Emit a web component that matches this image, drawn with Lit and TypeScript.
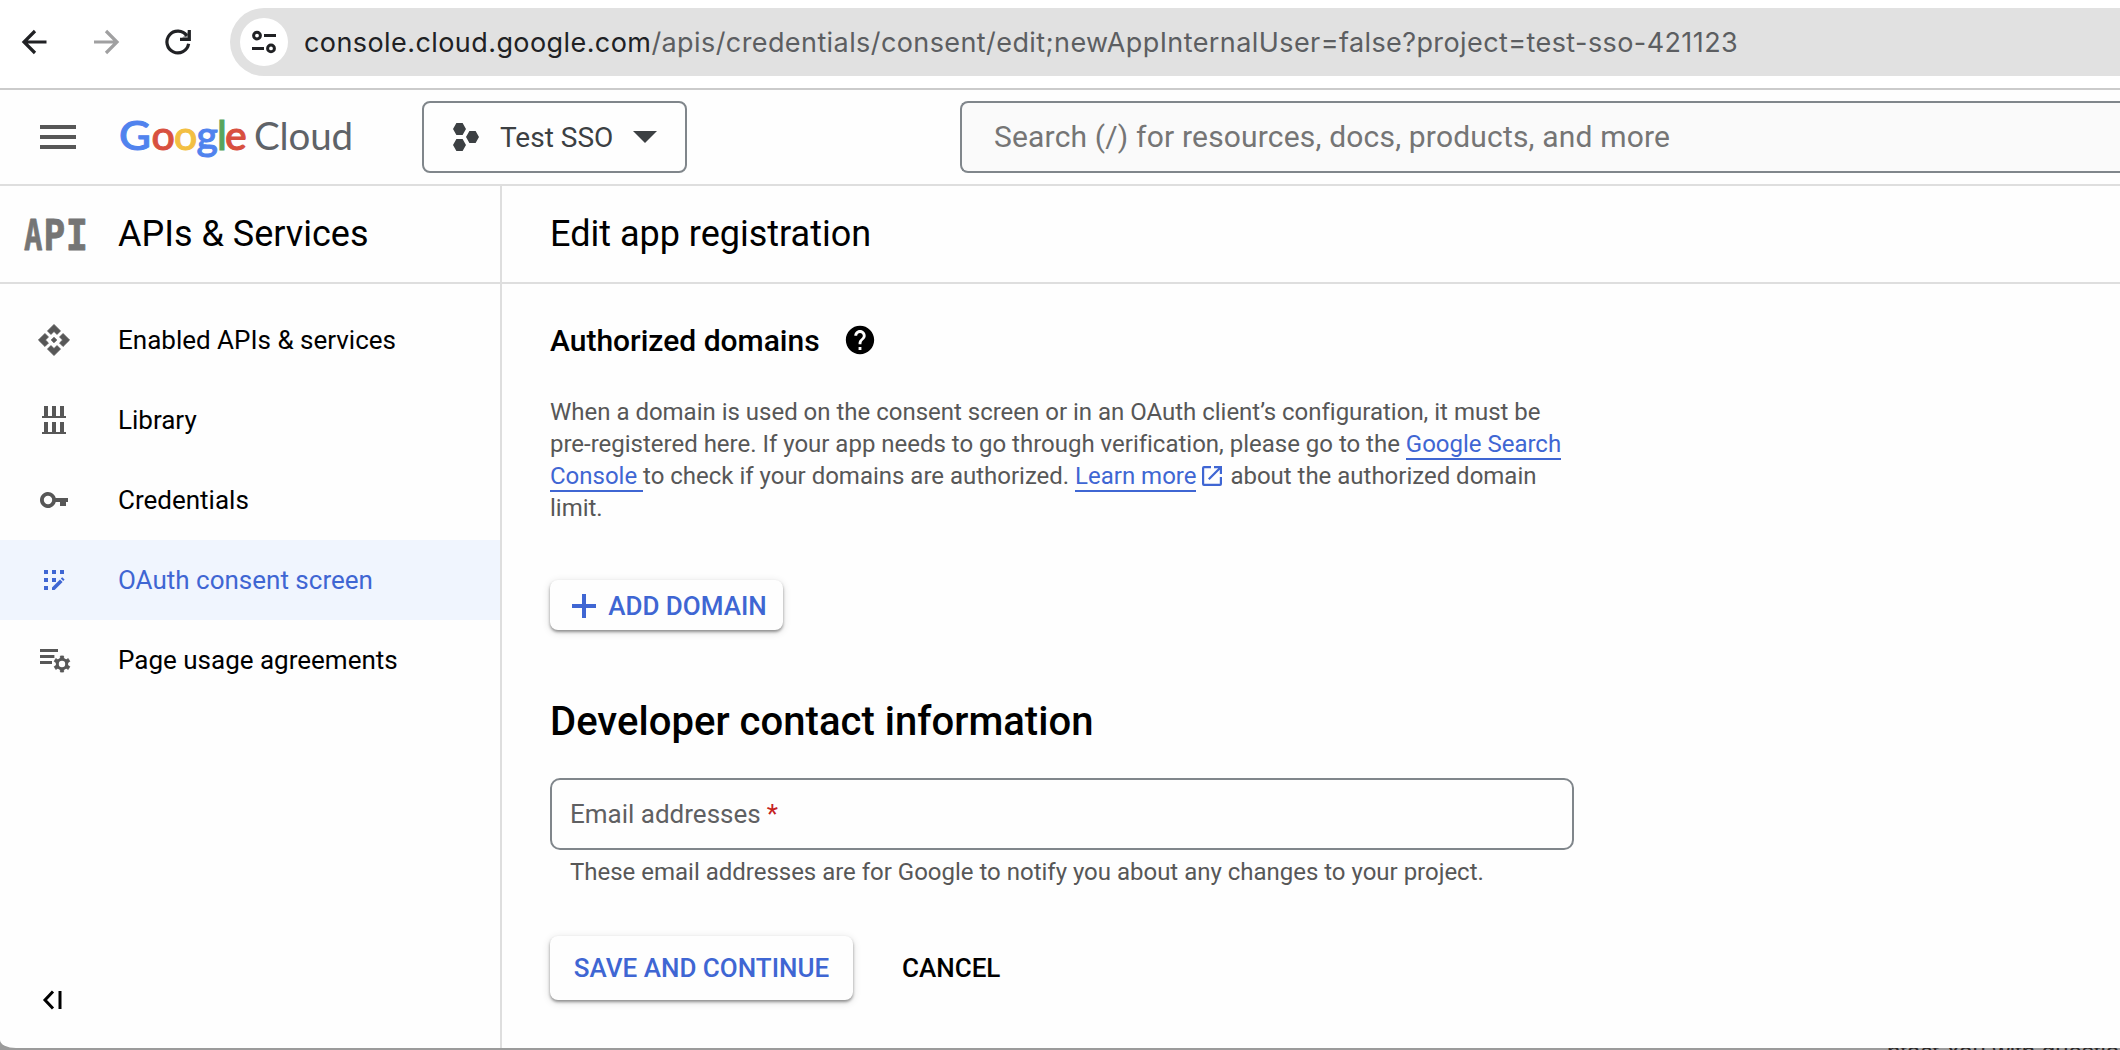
import { LitElement, html, css, svg } from "lit";
import { customElement } from "lit/decorators.js";
import { classMap } from "lit/directives/class-map.js";

const NAV = [
  {
    label: "Enabled APIs & services",
    icon: svg`<path d="M14 12l-2 2-2-2 2-2 2 2zm-2-6l2.12 2.12 2.5-2.5L12 1 7.38 5.62l2.5 2.5L12 6zm-6 6l2.12-2.12-2.5-2.5L1 12l4.62 4.62 2.5-2.5L6 12zm12 0l-2.12 2.12 2.5 2.5L23 12l-4.62-4.62-2.5 2.5L18 12zm-6 6l-2.12-2.12-2.5 2.5L12 23l4.62-4.62-2.5-2.5L12 18z" stroke="currentColor" stroke-width=".5" transform="translate(12 12) scale(.71) translate(-12 -12)"/>`,
  },
  {
    label: "Library",
    icon: svg`<path d="M7 5h2v5h2V5h2v5h2V5h2v5h1v1H6v-1h1zM7 13h2v5h2v-5h2v5h2v-5h2v5h1v1H6v-1h1z"/>`,
  },
  {
    label: "Credentials",
    icon: svg`<path fill-rule="evenodd" d="M12.87 11A4 4 0 1 0 12.87 13H15v2h3v-2h1v-2zM9 14.1a2.1 2.1 0 1 1 0-4.2 2.1 2.1 0 0 1 0 4.2z"/>`,
  },
  {
    label: "OAuth consent screen",
    icon: svg`<path d="M7 7h2v2H7zM11 7h2v2h-2zM15 7h2v2h-2zM7 11h2v2H7zM11 11h2v2h-2zM7 15h2v2H7zM11 15.7l4-4 1.3 1.3-4 4H11zM15.4 11.3l.7-.7 1.2 1.2-.7.7z"/>`,
    active: true,
  },
  {
    label: "Page usage agreements",
    icon: svg`<path d="M5 6.5h9V8H5zM5 9.5h7.2V11H5zM5 12.5h6V14H5z"/><circle cx="16" cy="14" r="2.35" fill="none" stroke="currentColor" stroke-width="1.5"/><path d="M15.2 10h1.6v1.5h-1.6zM15.2 16.5h1.6V18h-1.6zM12.1 12.7l.8-1.4 1.3.8-.8 1.4zM17.8 15.9l.8-1.4 1.3.8-.8 1.4zM12.1 15.3l.8 1.4 1.3-.8-.8-1.4zM17.8 12.1l.8 1.4 1.3-.8-.8-1.4z" stroke="currentColor" stroke-width=".4"/>`,
  },
];

@customElement("app-root")
export class AppRoot extends LitElement {
  static styles = css`
    :host {
      display: block;
      width: 2120px;
      height: 1050px;
      overflow: hidden;
      background: #9b9b9b;
      font-family: Roboto, "Liberation Sans", sans-serif;
      color: #000;
    }
    * {
      box-sizing: border-box;
    }
    svg {
      display: block;
      flex: none;
      fill: currentColor;
    }
    .window {
      height: 1048px;
      background: #fefefe;
      border-bottom-left-radius: 16px 8px;
      overflow: hidden;
      display: flex;
      flex-direction: column;
      white-space: nowrap;
    }
    .browser {
      height: 90px;
      flex: none;
      border-bottom: 2px solid #cbcbcb;
      display: flex;
      padding: 8px 0 12px;
      background: #fff;
    }
    .tools {
      width: 230px;
      flex: none;
      color: #202124;
    }
    .omnibox {
      flex: 1;
      background: #e1e1e1;
      border-radius: 34px 0 0 34px;
      display: flex;
      align-items: center;
      padding-left: 10px;
      font-family: Inter, sans-serif;
      font-size: 27px;
      color: #5c5e61;
    }
    .site {
      width: 48px;
      height: 48px;
      border-radius: 50%;
      background: #fff;
      color: #202124;
      margin-right: 16px;
    }
    .url {
      line-height: 34px;
      padding-top: 1px;
      letter-spacing: 0.41px;
    }
    .host {
      color: #202124;
      letter-spacing: 0.42px;
    }
    .header {
      height: 96px;
      flex: none;
      border-bottom: 2px solid #dedede;
      display: flex;
      align-items: center;
    }
    .menu {
      margin-left: 40px;
      color: #575757;
    }
    .logo {
      margin-left: 44px;
      width: 302px;
    }
    .picker {
      width: 265px;
      height: 72px;
      border: 2px solid #80868b;
      border-radius: 8px;
      color: #3c4043;
      font-size: 28px;
      display: flex;
      align-items: center;
      padding-left: 29px;
    }
    .picker-name {
      width: 133px;
      margin-left: 21px;
    }
    .search {
      margin-left: 273px;
      flex: 1;
      height: 72px;
      border: 2px solid #80868b;
      border-right: none;
      border-radius: 8px 0 0 8px;
      background: #fafafa;
      color: #757575;
      font-size: 30px;
      letter-spacing: 0.18px;
      display: flex;
      align-items: center;
      padding: 0 0 2px 32px;
    }
    .body {
      flex: 1;
      display: flex;
    }
    .side {
      width: 502px;
      flex: none;
      border-right: 2px solid #dedede;
      display: flex;
      flex-direction: column;
    }
    .bar {
      height: 98px;
      flex: none;
      border-bottom: 2px solid #dedede;
      display: flex;
      align-items: center;
      font-size: 36px;
    }
    .api {
      margin: 0 32px 0 22px;
    }
    .main-bar {
      padding-left: 48px;
    }
    .nav {
      padding-top: 16px;
      flex: 1;
    }
    .item {
      height: 80px;
      display: flex;
      align-items: center;
      padding-left: 30px;
      font-size: 26px;
    }
    .item svg {
      margin-right: 40px;
      color: #575757;
    }
    .item.active,
    .item.active svg {
      color: #3f66d3;
    }
    .item.active {
      background: #f0f5fe;
    }
    .collapse {
      padding: 0 0 36px 40px;
    }
    .main {
      flex: 1;
    }
    .content {
      padding-left: 48px;
    }
    .section {
      display: flex;
      align-items: center;
      height: 36px;
      margin-top: 38px;
      font-size: 30px;
      font-weight: 500;
    }
    .section svg {
      margin-left: 23px;
    }
    .para {
      margin: 38px 0 0;
      width: 1024px;
      font-size: 24px;
      line-height: 32px;
      letter-spacing: -0.01px;
      color: #575757;
    }
    .link {
      color: #3f66d3;
      border-bottom: 2px solid #3f66d3;
      padding-bottom: 0;
    }
    .ext {
      display: inline-block;
      vertical-align: -2px;
      margin: 0 2px 0 6px;
      color: #3f66d3;
    }
    .btn {
      display: flex;
      align-items: center;
      justify-content: center;
      border-radius: 8px;
      background: #fefefe;
      color: #3f66d3;
      font-size: 26px;
      font-weight: 500;
      box-shadow: 0 2px 3px rgba(0, 0, 0, 0.38), 0 2px 8px rgba(0, 0, 0, 0.14);
    }
    .add {
      margin-top: 56px;
      width: 233px;
      height: 50px;
      gap: 12px;
      padding: 2px 0 0 6px;
    }
    .h2 {
      margin-top: 69px;
      height: 46px;
      line-height: 46px;
      font-size: 40px;
      font-weight: 500;
      letter-spacing: 0.04px;
    }
    .field {
      margin-top: 33px;
      width: 1024px;
      height: 72px;
      border: 2px solid #80868b;
      border-radius: 10px;
      display: flex;
      align-items: center;
      padding-left: 18px;
      font-size: 26px;
      color: #5f6062;
    }
    .req {
      color: #c5221f;
      margin-left: 6px;
    }
    .hint {
      margin: 6px 0 0 20px;
      line-height: 32px;
      font-size: 24px;
      letter-spacing: -0.01px;
      color: #575757;
    }
    .actions {
      margin-top: 48px;
      display: flex;
      align-items: center;
    }
    .save {
      width: 303px;
      height: 64px;
    }
    .cancel {
      margin-left: 49px;
      font-size: 26px;
      font-weight: 500;
    }
    .behind {
      height: 2px;
      overflow: hidden;
      padding-left: 1887px;
      color: #2a2626;
      font: 24px "Liberation Sans", sans-serif;
      white-space: nowrap;
      background: #9b9b9b;
    }
    .behind-text {
      margin-top: -10px;
      line-height: 28px;
    }
  `;

  render() {
    return html`
      <div class="window">
        <div class="browser">
          <div class="tools">
            <svg width="230" height="68" viewBox="0 8 230 68" fill="none">
              <g fill="none" stroke="currentColor" stroke-width="3.2">
                <path d="M46.5 42H24.5M35 31L24 42l11 11" />
                <path d="M94 42h22M106 31l11 11-11 11" stroke="#a0a0a1" />
                <path d="M188.6 43.8A10.9 10.9 0 1 1 186.8 35.8" />
                <path d="M189.3 30v9.3H180" />
              </g>
              <path d="M190 30v10h-10z" opacity=".45" />
            </svg>
          </div>
          <div class="omnibox">
            <div class="site">
              <svg width="48" height="48" fill="none">
                <g fill="none" stroke="currentColor" stroke-width="3">
                  <circle cx="17" cy="17.6" r="3.4" />
                  <circle cx="31" cy="30.4" r="3.4" />
                  <path d="M24 17.6h12M12 30.4h12" />
                </g>
              </svg>
            </div>
            <div class="url"><span class="host">console.cloud.google.com</span>/apis/credentials/consent/edit;newAppInternalUser=false?project=test-sso-421123</div>
          </div>
        </div>

        <div class="header">
          <svg class="menu" width="36" height="24"><path d="M0 0h36v4H0zM0 10h36v4H0zM0 20h36v4H0z" /></svg>
          <svg class="logo" width="302" height="60" font-family="Lato, sans-serif">
            <g font-size="41" font-weight="500" stroke-width="1">
              <text y="43" x="-1" fill="#5083ee" stroke="#5083ee" textLength="32" lengthAdjust="spacingAndGlyphs">G</text>
              <text y="43" x="31.5" fill="#d8503f" stroke="#d8503f">o</text>
              <text y="43" x="54" fill="#f3bf42" stroke="#f3bf42">o</text>
              <text y="43" x="76.5" fill="#5083ee" stroke="#5083ee">g</text>
              <text y="43" x="97" fill="#58a55c" stroke="#58a55c">l</text>
              <text y="43" x="105" fill="#d8503f" stroke="#d8503f">e</text>
            </g>
            <text x="134" y="43" font-size="38.5" fill="#5f6368" textLength="99">Cloud</text>
          </svg>
          <div class="picker">
            <svg width="26" height="28" viewBox="0 0 26 28">
              <path d="M3.4 0h6.2L13 6 9.6 12H3.4L0 6zM3.4 16h6.2L13 22 9.6 28H3.4L0 22zM16.4 8h6.2L26 14 22.6 20h-6.2L13 14z" />
            </svg>
            <div class="picker-name">Test SSO</div>
            <svg width="24" height="12"><path d="M0 0h24L12 12z" /></svg>
          </div>
          <div class="search">Search (/) for resources, docs, products, and more</div>
        </div>

        <div class="body">
          <div class="side">
            <div class="bar">
              <svg class="api" width="64" height="32" overflow="visible">
                <g fill="#757575" stroke="#757575" stroke-width=".8" stroke-linejoin="round" font-family="DejaVu Sans Mono, monospace" font-weight="700" font-size="42">
                  <text transform="translate(2 31.5) scale(.73 1)">A</text>
                  <text transform="translate(21.4 31.5) scale(.86 1)">P</text>
                  <text transform="translate(43.7 31.5) scale(.88 1)">I</text>
                </g>
              </svg>
              APIs &amp; Services
            </div>
            <div class="nav">
              ${NAV.map(
                (n) => html`<div class=${classMap({ item: true, active: !!n.active })}>
                  <svg width="48" height="48" viewBox="0 0 24 24">${n.icon}</svg>${n.label}
                </div>`
              )}
            </div>
            <div class="collapse">
              <svg width="24" height="24" fill="none">
                <path d="M13 3.5L5 12l8 8.5M20 3v18" fill="none" stroke="#000" stroke-width="3" />
              </svg>
            </div>
          </div>

          <div class="main">
            <div class="bar main-bar">Edit app registration</div>
            <div class="content">
              <div class="section">
                Authorized domains
                <svg width="34" height="34" viewBox="0 0 24 24">
                  <path d="M12 2C6.48 2 2 6.48 2 12s4.48 10 10 10 10-4.48 10-10S17.52 2 12 2zm1 17h-2v-2h2v2zm2.07-7.75l-.9.92C13.45 12.9 13 13.5 13 15h-2v-.5c0-1.1.45-2.1 1.17-2.83l1.24-1.26c.37-.36.59-.86.59-1.41 0-1.1-.9-2-2-2s-2 .9-2 2H8c0-2.21 1.79-4 4-4s4 1.79 4 4c0 .88-.36 1.68-.93 2.25z" />
                </svg>
              </div>
              <p class="para">
                When a domain is used on the consent screen or in an OAuth client’s configuration, it must be<br />pre-registered here. If your app needs to go through verification, please go to the <span class="link">Google Search</span><br /><span class="link">Console </span>to check if your domains are authorized. <span class="link">Learn more</span><svg class="ext" width="20" height="20"><path fill-rule="evenodd" d="M2 0h7v2.2H2.2v15.6h15.6V11H20v7a2 2 0 0 1-2 2H2a2 2 0 0 1-2-2V2a2 2 0 0 1 2-2zM12 0h8v8h-2.2V3.8L7.6 14 6 12.4 16.2 2.2H12z" /></svg> about the authorized domain<br />limit.
              </p>
              <div class="btn add">
                <svg width="24" height="24"><path d="M10 0h4v10h10v4H14v10h-4V14H0v-4h10z" /></svg>
                ADD DOMAIN
              </div>
              <div class="h2">Developer contact information</div>
              <div class="field">Email addresses<span class="req">*</span></div>
              <div class="hint">These email addresses are for Google to notify you about any changes to your project.</div>
              <div class="actions">
                <div class="btn save">SAVE AND CONTINUE</div>
                <div class="cancel">CANCEL</div>
              </div>
            </div>
          </div>
        </div>
      </div>
      <div class="behind"><div class="behind-text">ntact You with questions</div></div>
    `;
  }
}
